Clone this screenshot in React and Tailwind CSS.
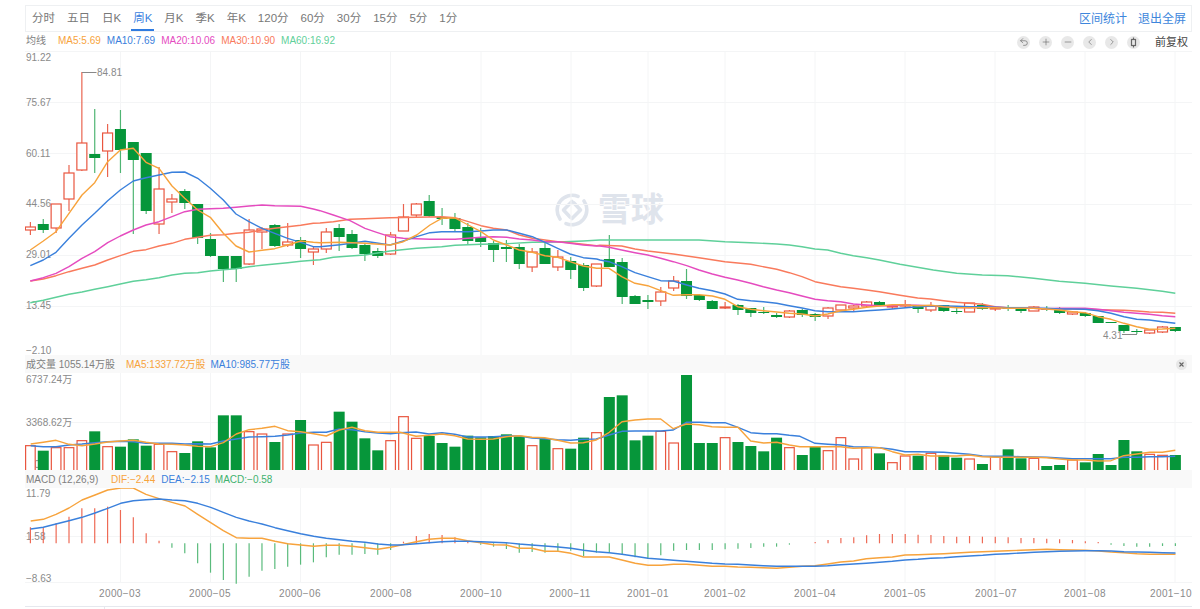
import React from "react";
import { Undo2, Plus, Minus, ChevronLeft, ChevronRight } from "lucide-react";

const RED = "#e9563f";
const GREEN = "#06963a";
const WICK_GREEN = "#4fb573";
const WICK_RED = "#ea6450";
const ORANGE = "#f7a33c";
const BLUE = "#3a80dc";
const MAGENTA = "#e54bbf";
const CORAL = "#f97a5c";
const MINT = "#5fd09a";
const GRID = "#f4f5f6";
const AXIS = "#8a8a8a";

const candleX = (i) => 30.4 + i * 12.865;

// top, bottom, high, low, rising
const candles = [
  [227, 230, 222, 235, 1], [224, 230, 219, 233, 0], [204, 228, 204, 233, 1], [173, 199, 165, 211, 1],
  [143, 170, 72, 171, 1], [154, 158, 109, 173, 0], [133, 151, 124, 177, 1], [129, 150, 110, 173, 0],
  [142, 160, 142, 234, 0], [153, 211, 153, 214, 0], [189, 224, 167, 234, 1], [199, 202, 194, 213, 1],
  [191, 203, 189, 209, 0], [204, 238, 204, 244, 0], [239, 256, 233, 257, 0], [256, 269, 256, 282, 0],
  [256, 269, 256, 282, 0], [230, 264, 219, 265, 1], [229, 232, 227, 249, 1], [225, 246, 224, 247, 0],
  [242, 245, 223, 247, 1], [240, 249, 237, 258, 0], [249, 252, 247, 265, 1], [232, 249, 228, 253, 1],
  [228, 237, 224, 251, 0], [234, 248, 230, 249, 0], [245, 254, 244, 261, 0], [251, 256, 248, 258, 0],
  [235, 254, 232, 255, 1], [217, 231, 204, 231, 1], [204, 215, 203, 217, 1], [201, 216, 195, 217, 0],
  [217, 219, 208, 225, 0], [218, 229, 213, 232, 0], [227, 241, 223, 245, 0], [237, 242, 228, 247, 0],
  [243, 250, 241, 262, 0], [247, 249, 240, 262, 0], [247, 264, 244, 269, 0], [252, 267, 248, 272, 1],
  [248, 264, 243, 264, 0], [257, 267, 250, 271, 1], [261, 270, 257, 279, 0], [265, 288, 263, 291, 0],
  [264, 286, 264, 287, 1], [259, 267, 235, 267, 0], [262, 297, 258, 304, 0], [296, 304, 295, 304, 0],
  [300, 302, 295, 309, 0], [292, 301, 287, 306, 1], [281, 288, 276, 291, 1], [281, 296, 269, 299, 0],
  [295, 300, 294, 301, 0], [301, 309, 300, 309, 0], [307, 308, 302, 309, 1], [305, 310, 304, 315, 0],
  [308, 313, 308, 317, 0], [312, 313, 307, 314, 0], [315, 317, 313, 318, 0], [311, 317, 310, 318, 1],
  [310, 315, 309, 317, 0], [314, 317, 313, 321, 0], [308, 316, 307, 319, 1], [305, 310, 305, 312, 1],
  [306, 308, 305, 311, 1], [302, 306, 301, 307, 1], [302, 305, 301, 306, 0], [306, 307, 305, 309, 1],
  [305, 306, 300, 308, 1], [306, 309, 305, 313, 0], [306, 310, 302, 312, 1], [305, 311, 305, 312, 0],
  [311, 312, 308, 314, 0], [303, 312, 303, 312, 1], [305, 309, 303, 310, 0], [308, 309, 306, 311, 1],
  [307, 309, 305, 311, 0], [309, 311, 307, 313, 0], [307, 311, 306, 311, 1], [309, 310, 306, 311, 0],
  [310, 313, 307, 314, 0], [312, 314, 311, 315, 1], [313, 316, 312, 317, 0], [316, 323, 316, 323, 0],
  [322, 323, 322, 323, 0], [325, 331, 325, 333, 0], [331, 332, 329, 334, 0], [330, 333, 329, 334, 1],
  [327, 332, 326, 333, 1], [327, 331, 327, 332, 0],
];

// vol tops, read off three crops of the pane
const volA = [
  [1, 272], [0, 287], [1, 278], [1, 278], [1, 257], [0, 229], [1, 275], [0, 275], [0, 253], [0, 272],
  [1, 268], [1, 290], [0, 294], [0, 259], [0, 277], [0, 181], [0, 181], [1, 230], [1, 237], [0, 261],
  [1, 237], [0, 195], [1, 270], [1, 262], [0, 170], [0, 200], [0, 250], [0, 286], [1, 257],
].map(([r, v]) => [r, 355 + v / 3]);
const volB = [
  [1, 140], [1, 205], [0, 198], [0, 219], [0, 230], [0, 197], [0, 202], [0, 198], [0, 193], [0, 198],
  [1, 227], [0, 205], [1, 236], [0, 236], [0, 203], [1, 188], [0, 81], [0, 76], [0, 211], [0, 197],
  [1, 184], [1, 219], [0, 15], [0, 219], [0, 219], [1, 203], [0, 216], [0, 228], [0, 244], [0, 203], [1, 233],
].map(([r, v]) => [r, 370 + v / 3]);
const volC = [
  [0, 165], [0, 141], [1, 152], [1, 113], [1, 177], [1, 143], [0, 160], [1, 188], [1, 168], [0, 167],
  [1, 160], [0, 166], [0, 173], [1, 177], [0, 192], [1, 170], [0, 148], [0, 175], [1, 175], [0, 198],
  [0, 195], [1, 180], [0, 187], [0, 162], [0, 195], [0, 120], [0, 154], [1, 163], [1, 166], [0, 165],
].map(([r, v]) => [r, 400 + v / 3]);
const volumes = [...volA, ...volB, ...volC];

const macdBars = [
  ...[172, 172, 160, 140, 115, 115, 110, 120, 142, 190, 212, 233, 250, 280, 308, 330, 341, 320, 302, 297, 290, 284, 277, 262, 254, 254, 252, 254, 240].map((v) => 470 + v / 3),
  ...[95, 78, 72, 75, 82, 92, 104, 110, 117, 128, 126, 128, 126, 122, 138, 128, 126, 135, 142, 146, 136, 122, 120, 120, 120, 118, 116, 114, 110, 110, 104, 100, 96, 90, 84, 82, 76, 72, 72, 72, 74, 75, 78, 80, 78, 80, 80, 82, 84, 84, 86, 88, 90, 94, 96, 104, 108, 110, 110, 108, 108].map((v) => 510 + v / 3),
];

// join crop-space points [x,y,x,y..] into page coords, later crops only continue to the right
const line = (...segs) => {
  const out = [];
  segs.forEach(([ox, oy, sx, flat]) => {
    for (let i = 0; i < flat.length; i += 2) {
      const x = ox + flat[i] / sx;
      const y = oy + flat[i + 1] / 3;
      if (!out.length || x > out[out.length - 1][0]) out.push([x, y]);
    }
  });
  return out.map((p) => p[0].toFixed(1) + "," + p[1].toFixed(1)).join(" ");
};

const ma5 = line(
  [20, 110, 3, [31,420,70,393,108,365,147,310,186,255,224,218,263,155,301,120,340,115,378,157,417,175,456,228,494,265,533,300,571,322,610,370,648,408,687,426,726,421,764,416,803,405,842,393,880,397,900,398]],
  [320, 180, 3, [0,187,60,187,135,190,210,195,250,185,290,165,330,135,365,115,405,114,445,135,483,155,520,180,560,195,598,210,637,217,675,227,713,232,750,245,790,258,830,265]],
  [600, 220, 3, [0,145,27,145,65,170,105,190,143,197,182,212,220,226,260,224,297,224,337,228,375,238,413,260,452,268,490,272,530,276,568,280,606,282,645,288,683,282,722,272,760,268,800,262,838,258,877,254,900,254]],
  [900, 270, 3, [53,107,92,106,131,110,170,113,208,113,247,113,285,113,323,115,362,115,401,115,439,117,478,120,517,125,555,128,594,140,633,148,672,160,710,170,748,178,787,177,826,175]]
);
const ma10 = line(
  [20, 110, 3, [31,467,70,450,108,427,147,385,186,345,224,310,263,272,301,240,340,213,378,203,417,195,456,187,494,186,533,205,571,235,610,270,648,312,687,335,726,355,764,370,803,385,842,397,880,410,900,410]],
  [320, 180, 3, [0,198,60,194,135,184,210,195,250,183,290,170,330,158,365,155,405,155,445,155,483,153,520,150,560,150,598,160,637,170,675,187,713,205,750,222,790,233,830,237]],
  [600, 220, 3, [0,120,27,125,65,140,105,158,143,170,182,182,220,183,260,195,297,205,337,212,375,222,413,238,452,242,490,245,530,250,568,257,606,264,645,272,683,275,722,275,760,275,800,272,838,270,877,267,900,265]],
  [900, 270, 3, [53,110,92,108,131,108,170,109,208,110,247,110,285,112,323,113,362,113,401,115,439,115,478,117,517,117,555,118,594,122,633,130,672,140,710,148,748,150,787,155,826,160]]
);
const ma20 = line(
  [20, 110, 3, [31,513,70,503,108,490,147,470,186,445,224,425,263,398,301,378,340,360,378,345,417,335,456,320,494,305,533,298,571,296,610,295,648,292,687,288,726,285,764,287,803,288,842,289,880,297,900,302]],
  [320, 180, 3, [0,95,40,105,90,122,135,145,170,157,210,170,250,175,330,178,405,178,483,172,520,170,560,172,598,177,637,180,675,185,713,185,750,190,790,195,830,198]],
  [600, 220, 3, [0,78,27,82,65,90,105,98,143,105,182,115,220,125,260,137,297,150,337,162,375,172,413,180,452,190,490,200,530,210,568,218,606,228,645,238,683,242,722,245,760,252,800,255,838,257,877,257,900,256]],
  [900, 270, 3, [53,106,92,108,131,110,170,112,208,113,247,112,285,112,323,113,362,113,401,115,439,116,478,115,517,115,555,115,594,118,633,122,672,127,710,130,748,133,787,137,826,140]]
);
const ma30 = line(
  [20, 110, 3, [31,513,70,507,108,497,147,485,186,475,224,465,263,450,301,437,340,424,378,419,417,408,456,400,494,388,533,382,571,376,610,374,648,370,687,367,726,360,764,355,803,350,842,346,880,340,900,339]],
  [320, 180, 3, [0,128,40,125,90,118,135,116,210,113,290,112,365,110,405,113,445,125,483,137,520,145,560,150,598,165,637,175,675,180,713,185,750,188,790,193,830,197]],
  [600, 220, 3, [0,76,65,78,105,87,143,93,220,102,297,113,375,125,452,133,530,148,568,158,606,170,645,185,683,193,722,200,760,205,800,210,838,215,900,226]],
  [900, 270, 3, [53,84,92,87,131,92,170,97,208,100,247,103,285,110,323,113,362,115,401,115,439,117,478,116,517,117,555,118,594,119,633,120,672,121,710,123,748,126,787,127,826,130]]
);
const ma60 = line(
  [20, 110, 3, [31,578,70,571,108,562,147,553,186,546,224,538,263,530,301,522,340,514,378,509,417,503,456,495,494,490,533,488,571,483,610,479,648,476,687,470,726,466,764,462,803,458,842,454,880,451,900,449]],
  [320, 180, 3, [0,237,40,232,90,228,135,225,210,213,290,205,365,200,405,196,483,193,560,191,637,187,713,186,790,183]],
  [600, 220, 3, [0,60,65,60,143,60,220,60,297,60,375,65,452,68,530,72,568,75,606,80,645,87,683,90,722,100,760,107,800,113,838,120,900,133]],
  [900, 270, 3, [100,0,170,10,247,15,323,17,401,25,478,34,555,40,633,48,710,55,787,64,826,70]]
);

const volMa5 = line(
  [0, 355, 3, [92,267,130,262,168,256,207,268,246,272,285,267,323,261,362,258,400,256,438,262,477,267,516,268,555,270,593,274,632,275,670,263,709,237,747,224,786,220,825,214,863,227,902,230,941,236,979,243,1018,225,1056,217,1095,227,1134,232,1172,232,1200,232]],
  [400, 370, 3, [0,187,48,199,87,196,126,192,164,197,203,207,242,208,280,207,319,200,358,197,396,202,434,203,473,211,512,219,550,218,589,210,628,187,666,155,705,150,743,147,782,147,820,176,859,162,898,164,936,170,975,172,1014,172,1052,213,1091,219,1130,217,1168,225,1200,230]],
  [800, 400, 3, [45,140,84,140,122,140,160,145,200,143,238,143,277,155,315,165,354,163,392,168,431,168,470,168,508,165,547,170,585,172,624,172,662,172,701,172,740,173,778,177,817,180,855,180,894,183,933,182,971,167,1010,162,1049,157,1087,157,1126,151]]
);
const volMa10 = line(
  [0, 355, 3, [92,272,130,275,168,275,207,270,246,267,285,263,323,260,362,259,400,260,438,265,477,265,516,265,555,267,593,266,632,267,670,258,709,252,747,246,786,245,825,244,863,240,902,234,941,232,979,232,1018,222,1056,224,1095,230,1134,234,1172,236,1200,233]],
  [400, 370, 3, [0,183,48,186,87,192,126,188,164,193,203,201,242,201,280,200,319,198,358,198,396,204,434,206,473,209,512,211,550,208,589,207,628,195,666,184,705,183,743,183,782,183,820,180,859,157,898,157,936,158,975,158,1014,172,1052,188,1091,191,1130,191,1168,196,1200,199]],
  [800, 400, 3, [45,130,84,133,122,135,160,140,200,141,238,143,277,148,315,155,354,155,392,156,431,157,470,160,508,163,547,168,585,169,624,169,662,170,701,171,740,172,778,174,817,176,855,176,894,176,933,176,971,172,1010,172,1049,170,1087,170,1126,169]]
);

const dif = line(
  [0, 470, 3, [92,153,130,148,168,133,207,114,246,90,285,75,323,60,362,54,400,54,438,73,477,86,516,97,555,108,593,133,632,158,670,182,709,203,747,205,786,205,825,214,863,221,902,225,941,229,979,226,1018,226,1056,229,1095,233,1134,238,1172,232,1200,226]],
  [400, 510, 1.96, [32,95,57,88,82,85,107,85,132,92,158,98,183,104,208,105,233,115,258,115,284,124,310,124,335,130,360,141,385,141,410,141,435,150,461,160,486,166,512,166,536,163,562,163,587,166,612,169,637,169,662,171,687,172,712,173,738,175,763,172,789,169,813,167,838,162,864,156,889,153,914,146,940,143,965,141,990,135,1015,134,1040,133,1066,131,1091,129,1116,127,1142,125,1167,124,1192,122,1217,121,1243,119,1268,118,1293,119,1318,120,1343,121,1369,123,1394,126,1419,128,1445,131,1470,133,1495,133,1520,133]]
);
const dea = line(
  [0, 470, 3, [92,177,130,172,168,162,207,152,246,142,285,129,323,115,362,100,400,92,438,89,477,87,516,90,555,92,593,100,632,112,670,127,709,142,747,153,786,162,825,173,863,182,902,191,941,199,979,205,1018,209,1056,214,1095,217,1134,222,1172,225,1200,225]],
  [400, 510, 1.96, [32,101,57,98,82,95,107,94,132,94,158,95,183,97,208,98,233,102,258,105,284,108,310,111,335,115,360,121,385,125,410,128,435,133,461,139,486,145,512,148,536,151,562,154,587,157,612,160,637,162,662,163,687,165,712,167,738,169,763,169,789,169,813,169,838,167,864,164,889,162,914,160,940,157,965,154,990,150,1015,148,1040,145,1066,143,1091,140,1116,138,1142,136,1167,133,1192,131,1217,129,1243,127,1268,125,1293,124,1318,123,1343,122,1369,122,1394,123,1419,125,1445,126,1470,127,1495,128,1520,129]]
);

const gridX = [120.5, 210.5, 300.5, 390.5, 481, 571, 648, 725, 815, 905, 995, 1085, 1175];
const dates = [
  [120, "2000−03"], [210, "2000−05"], [300, "2000−06"], [391, "2000−08"], [481, "2000−10"], [570, "2000−11"],
  [648, "2001−01"], [725, "2001−02"], [815, "2001−04"], [905, "2001−05"], [996, "2001−07"], [1085, "2001−08"], [1171, "2001−10"],
];
const tabs = ["分时", "五日", "日K", "周K", "月K", "季K", "年K", "120分", "60分", "30分", "15分", "5分", "1分"];

const FONT = "'Liberation Sans', 'Noto Sans CJK SC', sans-serif";

const Grid = ({ top, bottom, rows }) => (
  <g stroke={GRID} strokeWidth="1">
    {rows.map((y) => <line key={y} x1="25" x2="1192" y1={y} y2={y} />)}
    {gridX.map((x) => <line key={x} x1={x} x2={x} y1={top} y2={bottom} />)}
  </g>
);

const AxisText = ({ y, children }) => (
  <text x="26" y={y + 3.5} fontSize="10" fill={AXIS} style={{ fontFamily: FONT }}>{children}</text>
);

const Poly = ({ points, color, w = 1.4 }) => (
  <polyline points={points} fill="none" stroke={color} strokeWidth={w} strokeLinejoin="round" />
);

const IconDot = ({ children }) => (
  <span className="w-[13px] h-[13px] rounded-full bg-[#e8e8e8] flex items-center justify-center text-[#666]">{children}</span>
);

const Candle = ({ d, i }) => {
  const x = candleX(i);
  const [top, bot, hi, lo, up] = d;
  return (
    <g>
      <line x1={x} x2={x} y1={hi} y2={lo} stroke={up ? WICK_RED : WICK_GREEN} strokeWidth="1.2" />
      {up ? (
        <rect x={x - 5} y={top} width="10" height={bot - top} fill="#fff" stroke={RED} strokeWidth="1.2" />
      ) : (
        <rect x={x - 5.5} y={top} width="11" height={bot - top} fill={GREEN} />
      )}
    </g>
  );
};

const XueqiuLogo = () => (
  <svg width="34" height="34" viewBox="0 0 34 34" fill="none" stroke="#dfe4ec" strokeWidth="3.6" strokeLinecap="round" strokeLinejoin="round">
    <path d="M23 3.4A15 15 0 0 0 5 26" />
    <path d="M11 30.6A15 15 0 0 0 29 8" />
    <path d="M17 8.5L8.5 17L15 24" />
    <path d="M17 25.5L25.5 17L19 10" />
  </svg>
);

export default function App() {
  return (
    <div className="w-[1200px] h-[609px] overflow-hidden bg-white pl-[25px] pr-[8px] pt-[5px]" style={{ fontFamily: FONT }}>
      {/* toolbar */}
      <div className="h-[27px] border border-[#eef0f2] flex items-center justify-between pl-[6px] pr-[5px]">
        <div className="flex items-center gap-[12px] text-[11.5px] text-[#777]">
          {tabs.map((t) => (
            t === "周K" ? (
              <span key={t} className="h-[25px] leading-[25px] text-[#3b82e0] border-b-2 border-[#2f7be0] -mx-[2px] px-[2px]">{t}</span>
            ) : (
              <span key={t} className="h-[25px] leading-[25px]">{t}</span>
            )
          ))}
        </div>
        <div className="flex items-center gap-[11px] text-[12px] text-[#3d86dc]">
          <span>区间统计</span>
          <span>退出全屏</span>
        </div>
      </div>

      {/* ma legend */}
      <div className="h-[16px] flex items-center justify-between text-[10px]">
        <div className="flex items-center">
          <span className="text-[#808080] w-[33px] pl-[1px]">均线</span>
          <div className="flex items-center gap-[6px]">
            <span className="text-[#f7a33c]">MA5:5.69</span>
            <span className="text-[#3a80dc]">MA10:7.69</span>
            <span className="text-[#e54bbf]">MA20:10.06</span>
            <span className="text-[#f97a5c]">MA30:10.90</span>
            <span className="text-[#5fd09a]">MA60:16.92</span>
          </div>
        </div>
        <div className="flex items-center gap-[9px] pr-[4px] pt-[4px]">
          <IconDot><Undo2 size={10} strokeWidth={1.6} /></IconDot>
          <IconDot><Plus size={10} strokeWidth={1.5} /></IconDot>
          <IconDot><Minus size={10} strokeWidth={1.5} /></IconDot>
          <IconDot><ChevronLeft size={10} strokeWidth={1.5} /></IconDot>
          <IconDot><ChevronRight size={10} strokeWidth={1.5} /></IconDot>
          <IconDot>
            <svg width="9" height="11" viewBox="0 0 9 11" fill="none" stroke="#666" strokeWidth="1.2">
              <rect x="2.5" y="2.5" width="4" height="6" />
              <path d="M4.5 0.5V2.5M4.5 8.5V10.5" />
            </svg>
          </IconDot>
          <span className="text-[11px] text-[#444] ml-[6px] w-[33px]">前复权</span>
        </div>
      </div>

      {/* kline pane */}
      <div className="relative h-[307px]">
        <div className="absolute left-[530px] top-[145px] flex items-center gap-[9px]">
          <XueqiuLogo />
          <span className="text-[33px] leading-[34px] font-bold text-[#dfe4ec]">雪球</span>
        </div>
        <svg className="relative block" width="1167" height="307" viewBox="25 48 1167 307">
          <Grid top={51} bottom={355} rows={[51.5, 102.5, 153.5, 204.5, 255.5, 306.5]} />
          <AxisText y={57}>91.22</AxisText>
          <AxisText y={102}>75.67</AxisText>
          <AxisText y={153}>60.11</AxisText>
          <AxisText y={203}>44.56</AxisText>
          <AxisText y={254}>29.01</AxisText>
          <AxisText y={305}>13.45</AxisText>
          <AxisText y={350}>−2.10</AxisText>
          {candles.map((d, i) => <Candle key={i} d={d} i={i} />)}
          <Poly points={ma60} color={MINT} />
          <Poly points={ma30} color={CORAL} />
          <Poly points={ma20} color={MAGENTA} />
          <Poly points={ma10} color={BLUE} />
          <Poly points={ma5} color={ORANGE} />
          <line x1="82" x2="96.5" y1="72.5" y2="72.5" stroke="#888" />
          <text x="97" y="76" fontSize="10" fill={AXIS} style={{ fontFamily: FONT }}>84.81</text>
          <line x1="1122" x2="1137" y1="334.5" y2="334.5" stroke="#888" />
          <text x="1103" y="338.5" fontSize="10" fill={AXIS} style={{ fontFamily: FONT }}>4.31</text>
        </svg>
      </div>

      {/* volume */}
      <div className="h-[18px] bg-[#f9f9f9] flex items-center justify-between text-[10px] pr-[5px]">
        <div className="flex items-center">
          <span className="text-[#808080] w-[101px] pl-[1px] whitespace-nowrap">成交量 1055.14万股</span>
          <span className="text-[#f7a33c] mr-[5px] whitespace-nowrap">MA5:1337.72万股</span>
          <span className="text-[#3a80dc] whitespace-nowrap">MA10:985.77万股</span>
        </div>
        <span className="w-[11px] h-[11px] rounded-full bg-[#e8e8e8] flex items-center justify-center">
          <svg width="7" height="7" viewBox="0 0 7 7" stroke="#666" strokeWidth="1.1"><path d="M1.5 1.5L5.5 5.5M5.5 1.5L1.5 5.5" /></svg>
        </span>
      </div>
      <svg className="block" width="1167" height="97" viewBox="25 373 1167 97">
        <Grid top={373} bottom={470} rows={[422.5]} />
        <AxisText y={379}>6737.24万</AxisText>
        <AxisText y={422}>3368.62万</AxisText>
        <AxisText y={464}>0.00</AxisText>
        {volumes.map(([r, y], i) => (
          r ? (
            <rect key={i} x={candleX(i) - 4.8} y={y} width="9.6" height={474 - y} fill="#fff" stroke={RED} strokeWidth="1.2" />
          ) : (
            <rect key={i} x={candleX(i) - 5.5} y={y} width="11" height={470 - y} fill={GREEN} />
          )
        ))}
        <Poly points={volMa10} color={BLUE} />
        <Poly points={volMa5} color={ORANGE} />
      </svg>

      {/* macd */}
      <div className="h-[18px] bg-[#f9f9f9] flex items-center text-[10px]">
        <span className="text-[#808080] w-[86px] pl-[1px] whitespace-nowrap">MACD (12,26,9)</span>
        <span className="text-[#f7a33c] mr-[6px] whitespace-nowrap">DIF:−2.44</span>
        <span className="text-[#3a80dc] mr-[5px] whitespace-nowrap">DEA:−2.15</span>
        <span className="text-[#3fb26f] whitespace-nowrap">MACD:−0.58</span>
      </div>
      <svg className="block" width="1167" height="118" viewBox="25 488 1167 118">
        <Grid top={488} bottom={582} rows={[536.5, 582.5]} />
        <AxisText y={493.5}>11.79</AxisText>
        <AxisText y={536}>1.58</AxisText>
        <AxisText y={578}>−8.63</AxisText>
        {macdBars.map((y, i) => (
          <line
            key={i}
            x1={candleX(i)}
            x2={candleX(i)}
            y1={y}
            y2="543.3"
            stroke={y < 543.3 ? "#ee6a55" : "#5abb7c"}
            strokeWidth="1.2"
          />
        ))}
        <Poly points={dif} color={ORANGE} />
        <Poly points={dea} color={BLUE} />
        {dates.map(([x, label]) => (
          <text key={label} x={x} y="597" fontSize="10" textAnchor="middle" fill={AXIS} className="tracking-[0.4px]" style={{ fontFamily: FONT }}>{label}</text>
        ))}
      </svg>
      <div className="h-[3px] border-t border-[#e6e8ee] flex">
        <div className="w-[80px] border-r border-[#e6e8ee]"></div>
      </div>
    </div>
  );
}
